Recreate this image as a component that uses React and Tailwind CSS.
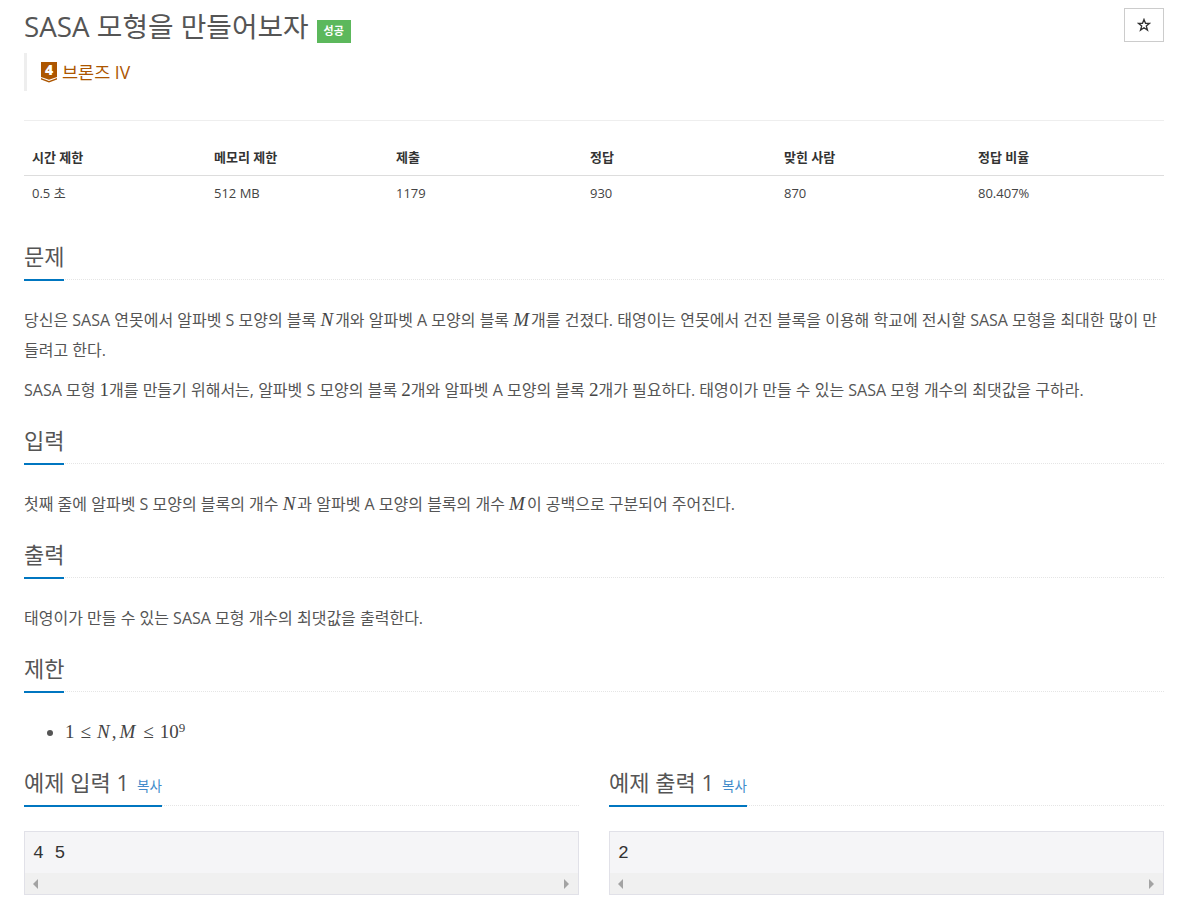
import React from 'react';

const N = ({ children }) => (
  <span className="font-['Liberation_Serif',serif] text-[#444] text-[19px]">{children}</span>
);
const I = ({ children }) => <i className="font-['Liberation_Serif',serif] text-[19px] text-[#444] mr-[2px]">{children}</i>;

function Headline({ children, extra }) {
  return (
    <div className="flex border-b border-dotted border-[#e5e5e5] h-[39px]">
      <h2 className="h-[40px] border-b-2 border-[#0076c0] text-[22px] leading-[30px] text-[#555] whitespace-nowrap">
        {children}
        {extra}
      </h2>
    </div>
  );
}

function Copy() {
  return <span className="ml-[8px] text-[13.5px] text-[#428bca]">복사</span>;
}

function SampleBox({ value }) {
  return (
    <div className="mt-[25px] border border-[#e1e1e8] bg-[#f5f5f7] h-[64px] flex flex-col">
      <div className="h-[41px] px-[8px] pt-[11px] text-[18px] leading-[20px] text-[#333] whitespace-pre font-['Liberation_Mono',monospace]">{value}</div>
      <div className="h-[21px] bg-[#f0f0f0] flex items-center justify-between px-[8px]">
        <svg width="6" height="10" viewBox="0 0 6 10"><path d="M5 0v10L0 5z" fill="#a3a3a3" /></svg>
        <svg width="6" height="10" viewBox="0 0 6 10"><path d="M0 0v10l5-5z" fill="#a3a3a3" /></svg>
      </div>
    </div>
  );
}

const stats = [
  ['시간 제한', '0.5 초', 'w-[182px]'],
  ['메모리 제한', '512 MB', 'w-[182px]'],
  ['제출', '1179', 'w-[194px]'],
  ['정답', '930', 'w-[194px]'],
  ['맞힌 사람', '870', 'w-[194px]'],
  ['정답 비율', '80.407%', 'flex-1'],
];

export default function App() {
  return (
    <div className="h-[905px] overflow-hidden bg-white pl-[24px] pr-[22px] font-['Open_Sans','Noto_Sans_CJK_KR',sans-serif] text-[16px] text-[#555]">
      <div className="flex justify-between h-[53px]">
        <div className="flex items-start">
          <h1 className="text-[27.8px] leading-[52px] text-[#555] whitespace-nowrap">SASA 모형을 만들어보자</h1>
          <span className="ml-[8px] mt-[20px] w-[34px] h-[23px] bg-[#5cb85c] text-white text-[11px] font-bold flex items-center justify-center">성공</span>
        </div>
        <button className="mt-[8px] w-[40px] h-[34px] border border-[#ccc] bg-white flex items-center justify-center">
          <svg width="14" height="14" viewBox="0 0 14 14" fill="none" stroke="#333" strokeWidth="1.3" strokeLinejoin="miter">
            <path d="M7 1.4 8.5 5.3h4L9.3 7.9l1.2 4.2L7 9.7l-3.5 2.4 1.2-4.2L1.5 5.3h4z" />
          </svg>
        </button>
      </div>

      <div className="h-[38px] border-l-[3px] border-[#eee] pl-[14px] flex items-center">
        <svg width="16" height="21" viewBox="0 0 16 21" className="overflow-visible">
          <path d="M0 0h16v15l-8 2.8L0 15z" fill="#ad5600" />
          <path d="M0 17.5l8 3 8-3V16l-8 3L0 16z" fill="#ad5600" />
          <text x="8" y="13" textAnchor="middle" fontSize="14" fontWeight="800" fill="#fff" fontFamily="'Open Sans',sans-serif">4</text>
        </svg>
        <span className="ml-[5px] text-[17.5px] leading-[25px] text-[#ad5600]">브론즈 IV</span>
      </div>

      <div className="mt-[29px] border-t border-[#eee]" />

      <div className="mt-[19px]">
        <div className="flex h-[36px] border-b border-[#ddd] items-center pt-[1px]">
          {stats.map(([head, , w]) => (
            <div key={head} className={`${w} pl-[8px] text-[13px] font-bold text-[#333]`}>{head}</div>
          ))}
        </div>
        <div className="flex h-[36px] items-center">
          {stats.map(([head, val, w]) => (
            <div key={head} className={`${w} pl-[8px] text-[13px] text-[#444]`}>{val}</div>
          ))}
        </div>
      </div>

      <section className="mt-[29px]">
        <Headline>문제</Headline>
        <p className="mt-[25px] leading-[30px]">
          당신은 SASA 연못에서 알파벳 S 모양의 블록 <I>N</I>개와 알파벳 A 모양의 블록 <I>M</I>개를 건졌다. 태영이는 연못에서 건진 블록을 이용해 학교에 전시할 SASA 모형을 최대한 많이 만들려고 한다.
        </p>
        <p className="mt-[10px] leading-[30px]">
          SASA 모형 <N>1</N>개를 만들기 위해서는, 알파벳 S 모양의 블록 <N>2</N>개와 알파벳 A 모양의 블록 <N>2</N>개가 필요하다. 태영이가 만들 수 있는 SASA 모형 개수의 최댓값을 구하라.
        </p>
      </section>

      <section className="mt-[20px]">
        <Headline>입력</Headline>
        <p className="mt-[25px] leading-[30px]">
          첫째 줄에 알파벳 S 모양의 블록의 개수 <I>N</I>과 알파벳 A 모양의 블록의 개수 <I>M</I>이 공백으로 구분되어 주어진다.
        </p>
      </section>

      <section className="mt-[20px]">
        <Headline>출력</Headline>
        <p className="mt-[25px] leading-[30px]">
          태영이가 만들 수 있는 SASA 모형 개수의 최댓값을 출력한다.
        </p>
      </section>

      <section className="mt-[20px]">
        <Headline>제한</Headline>
        <ul className="mt-[25px] pl-[41px] list-disc">
          <li className="leading-[30px]">
            <N>1<span className="mx-[6px]">≤</span><I>N</I>,<span className="ml-[3px]"><I>M</I></span><span className="mx-[6px]">≤</span>10<sup className="text-[13px]">9</sup></N>
          </li>
        </ul>
      </section>

      <div className="mt-[20px] flex gap-[30px]">
        <div className="w-[555px]">
          <Headline extra={<Copy />}>
            예제 입력 1
          </Headline>
          <SampleBox value="4 5" />
        </div>
        <div className="w-[555px]">
          <Headline extra={<Copy />}>
            예제 출력 1
          </Headline>
          <SampleBox value="2" />
        </div>
      </div>
    </div>
  );
}
